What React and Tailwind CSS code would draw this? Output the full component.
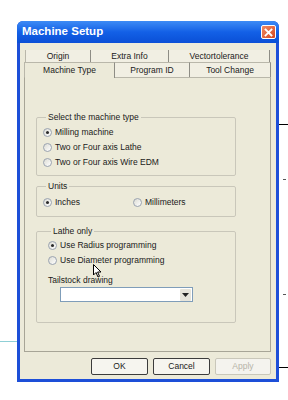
const font = { fontFamily: '"Liberation Sans", Arial, sans-serif' };

function Radio({ checked, label, className = '' }) {
  return (
    <div className={`flex h-[15px] items-center gap-[3px] ${className}`}>
      <span className="flex h-[9px] w-[9px] items-center justify-center rounded-full border border-[#9aa3b0] bg-gradient-to-br from-[#dcdcd4] to-white">
        {checked && <span className="h-[3px] w-[3px] rounded-full bg-[#2a2a2a]" />}
      </span>
      <span className="text-[8.5px] leading-none text-[#1a1a1a]">{label}</span>
    </div>
  );
}

function Group({ title, className = '', children }) {
  return (
    <fieldset className={`rounded-[2px] border border-[#c9c7ba] ${className}`}>
      <legend className="ml-[3px] px-[2px] text-[8.5px] leading-[10px] text-[#1a1a1a]">{title}</legend>
      {children}
    </fieldset>
  );
}

function Tab({ label, w, active, bottom }) {
  return (
    <div
      className={`flex items-center justify-center border-r border-[#8e8d85] text-[8.5px] leading-none text-[#1a1a1a] ${
        active ? 'relative z-10 -mb-px bg-[#ecead9]' : 'bg-[#f1efe3]'
      } ${bottom ? 'border-t border-t-[#b9b7aa]' : ''}`}
      style={{ width: w }}
    >
      {label}
    </div>
  );
}

function Button({ label, disabled }) {
  return (
    <div
      className={`flex h-[17px] items-center justify-center rounded-[2px] border text-[8.5px] leading-none ${
        disabled ? 'w-[56px] border-[#c9c7ba] bg-[#f4f3ee] text-[#b6b4a8]' : 'w-[57px] border-[#3c3c3c] bg-[#f6f5ef] text-[#1a1a1a]'
      }`}
    >
      {label}
    </div>
  );
}

export default function App() {
  return (
    <div className="relative h-[400px] w-[288px] overflow-hidden bg-white" style={font}>
      {/* stray drawing lines outside the dialog */}
      <div className="absolute left-[279px] top-[124px] h-px w-[9px] bg-black" />
      <div className="absolute left-[279px] top-[367px] h-px w-[9px] bg-black" />
      <div className="absolute left-[283px] top-[179px] h-px w-[3px] bg-[#555]" />
      <div className="absolute left-[283px] top-[294px] h-px w-[3px] bg-[#555]" />
      <div className="absolute left-0 top-[341px] h-px w-[17px] bg-[#8fcfd6]" />

      <div className="pl-[17px] pt-[21px]">
        <div className="flex h-[361px] w-[262px] flex-col overflow-hidden rounded-t-[6px] bg-[#1d4fd8]">
          {/* title bar */}
          <div className="flex h-[22px] shrink-0 items-center justify-between bg-gradient-to-b from-[#3d8bf5] via-[#1360e6] to-[#0a4fd6] pl-[5px] pr-[3px]">
            <span className="text-[11.5px] font-bold text-white">Machine Setup</span>
            <div className="flex h-[14px] w-[15px] items-center justify-center rounded-[2px] border border-white bg-gradient-to-br from-[#f08a62] to-[#d4471e]">
              <svg width="9" height="9" viewBox="0 0 9 9">
                <path d="M1.5 1.5 L7.5 7.5 M7.5 1.5 L1.5 7.5" stroke="white" strokeWidth="1.8" strokeLinecap="square" />
              </svg>
            </div>
          </div>

          {/* body */}
          <div className="mx-[3px] mb-[3px] flex flex-1 flex-col bg-[#ecead9] pl-[4px] pr-[5px] pt-[7px]">
            <div className="flex h-[12px] pl-[1px]">
              <div className="flex border-l border-[#b9b7aa]">
                <Tab label="Origin" w={65} />
                <Tab label="Extra Info" w={78} />
                <Tab label="Vectortolerance" w={101} />
              </div>
            </div>
            <div className="flex h-[15px] border-l border-[#b9b7aa]">
              <Tab label="Machine Type" w={90} active bottom />
              <Tab label="Program ID" w={75} bottom />
              <Tab label="Tool Change" w={81} bottom />
            </div>

            {/* tab panel */}
            <div className="flex h-[275px] w-[247px] flex-col border border-[#a7a597] border-t-[#b9b7aa] bg-[#ecead9] pl-[11px] pt-[34px]">
              <Group title="Select the machine type" className="w-[200px] pb-[5px] pl-[6px] pt-[3px]">
                <Radio checked label="Milling machine" />
                <Radio label="Two or Four axis Lathe" />
                <Radio label="Two or Four axis Wire EDM" />
              </Group>

              <Group title="Units" className="mt-[5px] w-[200px] pb-[6px] pl-[6px] pt-[4px]">
                <div className="flex">
                  <Radio checked label="Inches" className="w-[90px]" />
                  <Radio label="Millimeters" />
                </div>
              </Group>

              <Group title="Lathe only" className="relative mt-[9px] w-[200px] pb-[20px] pl-[11px] pt-[2px]">
                <Radio checked label="Use Radius programming" />
                <Radio label="Use Diameter programming" />
                <div className="mt-[6px] text-[8.5px] leading-[12px] text-[#1a1a1a]">Tailstock drawing</div>
                <div className="ml-[12px] mt-[1px] flex h-[15px] w-[133px] items-center justify-end border border-[#7f9db9] bg-white pr-px">
                  <div className="flex h-[12px] w-[11px] items-center justify-center rounded-[1px] bg-[#e6e4da]">
                    <svg width="7" height="4" viewBox="0 0 7 4">
                      <path d="M0 0 L7 0 L3.5 4 Z" fill="#222" />
                    </svg>
                  </div>
                </div>
                {/* mouse pointer */}
                <svg className="absolute left-[56px] top-[28px]" width="9" height="14" viewBox="0 0 9 14">
                  <path d="M0.5 0.5 L0.5 11 L3 8.5 L5 13 L6.5 12.3 L4.6 8 L8 8 Z" fill="white" stroke="black" strokeWidth="1" />
                </svg>
              </Group>
            </div>

            <div className="mt-[6px] flex justify-end gap-[5px]">
              <Button label="OK" />
              <Button label="Cancel" />
              <Button label="Apply" disabled />
            </div>
          </div>
        </div>
      </div>
    </div>
  );
}
